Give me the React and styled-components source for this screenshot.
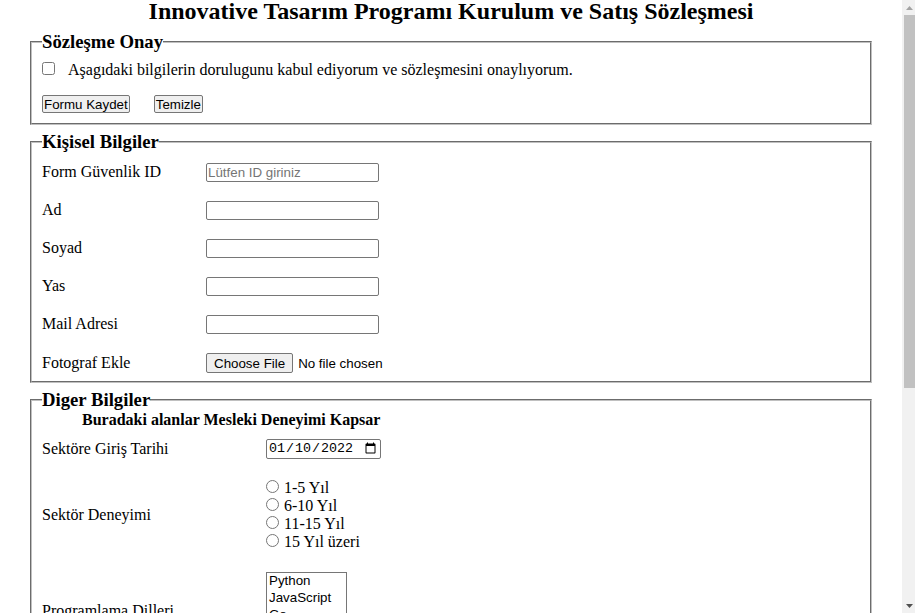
import React from 'react';
import styled, { createGlobalStyle } from 'styled-components';

const GlobalStyle = createGlobalStyle`
  html, body { margin: 0; background: #fff; }
  body {
    font-family: "Liberation Serif", "Times New Roman", serif;
    font-size: 16px;
    color: #000;
  }
`;

const Viewport = styled.div`
  display: flex;
  height: 100vh;
  overflow: hidden;
`;

const Page = styled.div`
  flex: 1;
  min-width: 0;
  padding: 0 8px;
  overflow: hidden;
`;

const ScrollBar = styled.div`
  flex: none;
  width: 13px;
  display: flex;
  flex-direction: column;
  background: #f1f1f1;
`;

const ScrollArrow = styled.div`
  flex: none;
  height: 15px;
  display: flex;
  align-items: center;
  justify-content: center;
  padding-left: 2px;
  color: ${(p) => (p.$disabled ? '#a3a3a3' : '#505050')};
`;

const ScrollThumb = styled.div`
  flex: none;
  height: 373px;
  margin-left: 2px;
  background: #c1c1c1;
`;

const ScrollSpace = styled.div`
  flex: 1;
`;

const Title = styled.h2`
  margin: -2px 0 6px;
  font-size: 24px;
  font-weight: bold;
  line-height: normal;
  text-align: center;
`;

const Fieldset = styled.fieldset`
  margin: 0 22px 6px;
  padding: 0 10px ${(p) => p.$bottom}px;
  border: 2px groove #c0c0c0;
  min-width: 0;
`;

const Legend = styled.legend`
  padding: 0;
  font-size: 18.72px;
  font-weight: bold;
  line-height: normal;
`;

const ConsentLine = styled.div`
  margin-top: 8px;
  line-height: normal;
`;

const Checkbox = styled.input`
  width: 13px;
  height: 13px;
  margin: 0 13px 0 0;
  vertical-align: baseline;
`;

const ButtonRow = styled.div`
  display: flex;
  gap: 24px;
  margin-top: 16px;
`;

const Button = styled.button`
  box-sizing: border-box;
  height: 18px;
  padding: 0 1px;
  font: 13.33px "Liberation Sans", Arial, sans-serif;
  color: #000;
  background: #efefef;
  border: 1px solid #767676;
  border-radius: 2px;
`;

const FormGrid = styled.div`
  display: grid;
  grid-template-columns: ${(p) => p.$labelWidth}px max-content;
  row-gap: ${(p) => p.$gap}px;
  align-items: ${(p) => p.$align};
  margin-top: ${(p) => p.$top}px;
`;

const Label = styled.label`
  line-height: normal;
`;

const TextInput = styled.input`
  box-sizing: border-box;
  width: 173px;
  height: 19px;
  padding: 0 1px;
  font: 13.33px "Liberation Sans", Arial, sans-serif;
  color: #000;
  border: 1px solid #767676;
  border-radius: 2px;
  &::placeholder {
    color: #757575;
  }
`;

const FileInput = styled.input`
  font: 13.33px "Liberation Sans", Arial, sans-serif;
  color: #000;
  &::file-selector-button {
    box-sizing: border-box;
    height: 20px;
    padding: 0 7px;
    margin-right: 5px;
    font: inherit;
    color: #000;
    background: #efefef;
    border: 1px solid #767676;
    border-radius: 2px;
  }
`;

const SubHeading = styled.div`
  padding-left: 40px;
  font-weight: bold;
  line-height: normal;
`;

const DateInput = styled.input`
  box-sizing: border-box;
  width: 115px;
  height: 20px;
  padding: 0 1px;
  font: 13.33px "Liberation Mono", "DejaVu Sans Mono", monospace;
  color: #000;
  border: 1px solid #767676;
  border-radius: 2px;
`;

const RadioGroup = styled.div`
  padding: 18.4px 0;
  line-height: normal;
`;

const RadioLine = styled.label`
  display: block;
`;

const Radio = styled.input`
  width: 13px;
  height: 13px;
  margin: 0 5px 0 0;
  vertical-align: baseline;
`;

const ListBox = styled.select`
  box-sizing: border-box;
  width: 81px;
  height: 78px;
  padding: 0;
  font: 13.33px "Liberation Sans", Arial, sans-serif;
  color: #000;
  border: 1px solid #767676;
  border-radius: 0;
`;

const TextArea = styled.textarea`
  box-sizing: border-box;
  width: 240px;
  height: 70px;
  font: 13.33px "Liberation Mono", monospace;
  border: 1px solid #767676;
  border-radius: 2px;
`;

const Triangle = ({ down }) => (
  <svg width="7" height="4" viewBox="0 0 7 4" aria-hidden="true">
    <polygon points={down ? '0,0 7,0 3.5,4' : '0,4 7,4 3.5,0'} fill="currentColor" />
  </svg>
);

const personalFields = [
  { label: 'Form Güvenlik ID', placeholder: 'Lütfen ID giriniz' },
  { label: 'Ad' },
  { label: 'Soyad' },
  { label: 'Yas' },
  { label: 'Mail Adresi' },
];

const experience = ['1-5 Yıl', '6-10 Yıl', '11-15 Yıl', '15 Yıl üzeri'];
const languages = ['Python', 'JavaScript', 'Go', 'Java', 'C#', 'C++', 'PHP'];

export default function App() {
  return (
    <>
      <GlobalStyle />
      <Viewport>
        <Page>
          <Title>Innovative Tasarım Programı Kurulum ve Satış Sözleşmesi</Title>
          <form>
            <Fieldset $bottom={10}>
              <Legend>Sözleşme Onay</Legend>
              <ConsentLine>
                <Checkbox type="checkbox" id="onay" />
                <label htmlFor="onay">
                  Aşagıdaki bilgilerin dorulugunu kabul ediyorum ve sözleşmesini onaylıyorum.
                </label>
              </ConsentLine>
              <ButtonRow>
                <Button type="button">Formu Kaydet</Button>
                <Button type="reset">Temizle</Button>
              </ButtonRow>
            </Fieldset>

            <Fieldset $bottom={8}>
              <Legend>Kişisel Bilgiler</Legend>
              <FormGrid $labelWidth={164} $gap={19} $align="baseline" $top={10}>
                {personalFields.map((f) => (
                  <React.Fragment key={f.label}>
                    <Label>{f.label}</Label>
                    <TextInput type="text" placeholder={f.placeholder} />
                  </React.Fragment>
                ))}
                <Label>Fotograf Ekle</Label>
                <FileInput type="file" />
              </FormGrid>
            </Fieldset>

            <Fieldset $bottom={10}>
              <Legend>Diger Bilgiler</Legend>
              <SubHeading>Buradaki alanlar Mesleki Deneyimi Kapsar</SubHeading>
              <FormGrid $labelWidth={224} $gap={2} $align="center" $top={10}>
                <Label>Sektöre Giriş Tarihi</Label>
                <DateInput type="date" defaultValue="2022-01-10" />

                <Label>Sektör Deneyimi</Label>
                <RadioGroup>
                  {experience.map((e) => (
                    <RadioLine key={e}>
                      <Radio type="radio" name="deneyim" value={e} />
                      {e}
                    </RadioLine>
                  ))}
                </RadioGroup>

                <Label>Programlama Dilleri</Label>
                <ListBox multiple>
                  {languages.map((l) => (
                    <option key={l}>{l}</option>
                  ))}
                </ListBox>

                <Label>Ek Açıklama</Label>
                <TextArea />

                <Label>Maaş Beklentisi</Label>
                <TextInput type="number" />
              </FormGrid>
            </Fieldset>
          </form>
        </Page>
        <ScrollBar aria-hidden="true">
          <ScrollArrow $disabled>
            <Triangle />
          </ScrollArrow>
          <ScrollThumb />
          <ScrollSpace />
          <ScrollArrow>
            <Triangle down />
          </ScrollArrow>
        </ScrollBar>
      </Viewport>
    </>
  );
}
